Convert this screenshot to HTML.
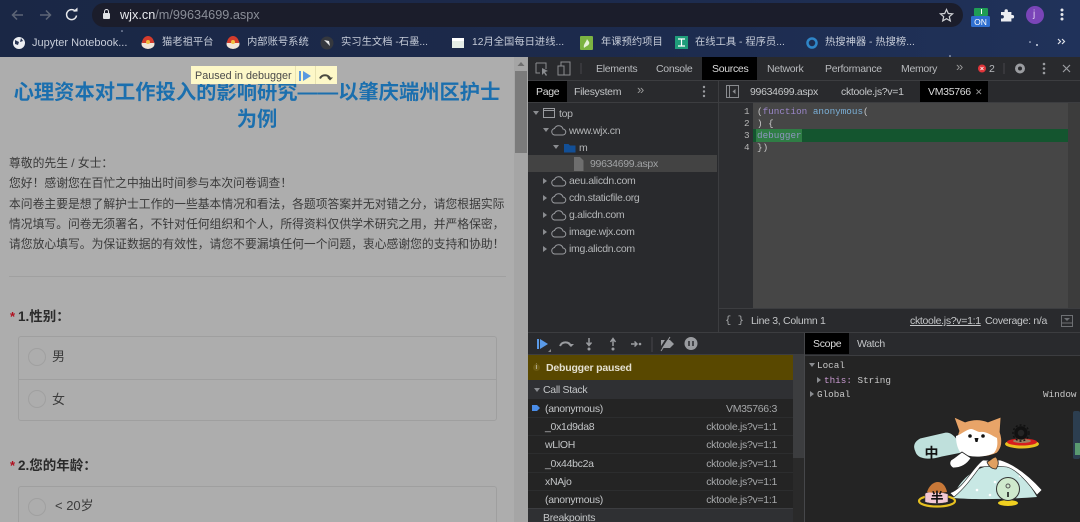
<!DOCTYPE html>
<html><head><meta charset="utf-8">
<style>
html,body{margin:0;padding:0;width:1080px;height:522px;overflow:hidden;background:#adadad}
body{position:relative;font-family:"Liberation Sans","Noto Sans CJK SC",sans-serif}
.a{position:absolute}
.t{position:absolute;white-space:nowrap;line-height:14px}
.bm{color:#c6ccd8;font-size:10.300px;top:36px}
.tab{color:#b8babd;font-size:10.500px;letter-spacing:-.3px;top:62px}
.sub{color:#c4c6c8;font-size:10.500px;letter-spacing:-.3px;top:85px}
.tree{color:#b4b6b8;font-size:10.500px;letter-spacing:-.3px}
.row{color:#c4c6c8;font-size:10.500px;letter-spacing:-.3px;left:545px}
.src{color:#a6a8aa;font-size:10.500px;letter-spacing:-.3px;right:303px}
.mono{font-family:"Liberation Mono",monospace;font-size:9.300px;color:#c8c8c8}
.cn{color:#3a3a3a;font-size:11.800px;left:9px;line-height:14px}
.line{position:absolute;background:#3c3d40}
.sep{position:absolute;background:#2c2d2e;left:528px;width:265px;height:1px}
svg{position:absolute;overflow:visible}
</style></head><body>

<!-- browser chrome -->
<div class="a" style="left:0;top:0;width:1080px;height:57px;background:linear-gradient(90deg,#1a2745,#1c2a4c 55%,#20325a)"></div>
<div class="a" style="left:92px;top:3px;width:871px;height:24px;border-radius:12px;background:#1b1d2b"></div>
<svg style="left:0;top:0" width="120" height="30" fill="none"><path d="M23 15h-10m4-4.500l-4.500 4.500 4.500 4.500" stroke="#5d6576" stroke-width="1.500"/><path d="M40 15h10m-4-4.500l4.500 4.500-4.500 4.500" stroke="#5d6576" stroke-width="1.500"/><path d="M75.500 11.500a5 5 0 1 0 1 4" stroke="#e6e8ec" stroke-width="1.500"/><path d="M73 11.500h4.500v-4z" fill="#e6e8ec"/><rect x="103" y="13" width="7" height="6" rx="1" fill="#e0e2e6"/><path d="M104.500 13v-1.500a2 2 0 0 1 4 0v1.500" stroke="#e0e2e6"/></svg>
<div class="t" style="left:120px;top:8px;font-size:12.700px;color:#e8eaee;line-height:14px">wjx.cn<span style="color:#8a8e98">/m/99634699.aspx</span></div>
<svg style="left:0;top:0" width="1080" height="57" fill="none">
<path d="M946.500 9.500l1.800 4 4.300.4-3.300 2.800 1 4.200-3.800-2.200-3.800 2.200 1-4.200-3.300-2.800 4.300-.4z" stroke="#d0d2d6" stroke-width="1.200"/>
<rect x="974" y="8" width="14" height="8" rx="1" fill="#1f9d55"/><rect x="981" y="9" width="1" height="5" fill="#fff"/><rect x="971" y="16" width="19" height="11" rx="1.500" fill="#2f6fd0"/>
<path d="M1001 12h3.500v-1a1.700 1.700 0 0 1 3.400 0v1h3.500v3h1a1.700 1.700 0 0 1 0 3.400h-1v3.100h-10.400v-3h1.200a1.700 1.700 0 0 0 0-3.400h-1.200z" fill="#eceef2"/>
<circle cx="1035" cy="15" r="9" fill="#7a45b8"/>
<circle cx="1062" cy="10" r="1.500" fill="#e6e8ec"/><circle cx="1062" cy="14.500" r="1.500" fill="#e6e8ec"/><circle cx="1062" cy="19" r="1.500" fill="#e6e8ec"/>
<circle cx="19" cy="43" r="6" fill="#eceef2"/><path d="M15 40l4 2-1 3-3-1zM21 38l2 3-3 1z" fill="#2a3654"/>
<ellipse cx="148" cy="44" rx="6.500" ry="5" fill="#f2e6d8"/><path d="M142 43c0-4 3-7 6-7s6 3 6 7z" fill="#d43c2c"/><circle cx="148" cy="42" r="2" fill="#f0c040"/>
<ellipse cx="233" cy="44" rx="6.500" ry="5" fill="#f2e6d8"/><path d="M227 43c0-4 3-7 6-7s6 3 6 7z" fill="#d43c2c"/><circle cx="233" cy="42" r="2" fill="#f0c040"/>
<circle cx="327" cy="43" r="6.500" fill="#35383e"/><path d="M324 40l5 1 1 5z" fill="#e8e8e8"/>
<rect x="452" y="38" width="12" height="10" fill="#e4ece6"/><rect x="452" y="38" width="12" height="3" fill="#fff"/>
<rect x="580" y="36" width="13" height="14" rx="1" fill="#7cb342"/><path d="M584 48c-1-4 2-5 3-9 1 2 3 3 2 5-1 2-3 2-5 4z" fill="#e6f2d8"/>
<rect x="675" y="36" width="13" height="13" fill="#1f9d7a"/><path d="M678 39h7M681.500 39v7M678 46h7" stroke="#fff" stroke-width="1.200"/>
<circle cx="812" cy="43" r="4.500" stroke="#2f86c8" stroke-width="2.500"/>
<path d="M1058 41l2.500 2.500-2.500 2.500M1062 41l2.500 2.500-2.500 2.500" stroke="#dfe2e8" stroke-width="1.200" transform="translate(0,-2)"/>
<circle cx="1030" cy="42" r=".8" fill="#cfd6e6"/><circle cx="1037" cy="45" r="1" fill="#cfd6e6"/><circle cx="950" cy="56" r=".8" fill="#cfd6e6"/><circle cx="122" cy="31" r=".8" fill="#aab4c8"/>
</svg>
<div class="t bm" style="left:32px;font-size:11px">Jupyter Notebook...</div>
<div class="t bm" style="left:162px">猫老祖平台</div>
<div class="t bm" style="left:247px">内部账号系统</div>
<div class="t bm" style="left:341px">实习生文档 -石墨...</div>
<div class="t bm" style="left:472px">12月全国每日进线...</div>
<div class="t bm" style="left:601px">年课预约项目</div>
<div class="t bm" style="left:695px">在线工具 - 程序员...</div>
<div class="t bm" style="left:825px">热搜神器 - 热搜榜...</div>
<div class="t" style="left:971px;top:17px;font-size:8.500px;color:#fff;line-height:10px;width:19px;text-align:center">ON</div>
<div class="t" style="left:1033px;top:8px;font-size:10px;color:#e0d0f0">j</div>

<!-- page -->
<div class="a" style="left:0;top:57px;width:514px;height:465px;background:#adadad"></div>
<div class="a" style="left:514px;top:57px;width:14px;height:465px;background:#a5a5a5"></div>
<div class="a" style="left:515px;top:71px;width:12px;height:82px;background:#7b7b7b"></div>
<svg style="left:514px;top:57px" width="14" height="14"><path d="M7 5l3.500 4h-7z" fill="#6e6e6e"/></svg>
<div class="t" style="left:0;width:514px;top:80px;text-align:center;font-size:20.300px;line-height:27px;font-weight:700;color:#1b6fae;white-space:normal;padding:0 8px;box-sizing:border-box">心理资本对工作投入的影响研究——以肇庆端州区护士为例</div>
<div class="t cn" style="top:156px">尊敬的先生 / 女士：</div>
<div class="t cn" style="top:176px">您好！感谢您在百忙之中抽出时间参与本次问卷调查！</div>
<div class="t cn" style="top:197px">本问卷主要是想了解护士工作的一些基本情况和看法，各题项答案并无对错之分，请您根据实际</div>
<div class="t cn" style="top:217px">情况填写。问卷无须署名，不针对任何组织和个人，所得资料仅供学术研究之用，并严格保密，</div>
<div class="t cn" style="top:237px">请您放心填写。为保证数据的有效性，请您不要漏填任何一个问题，衷心感谢您的支持和协助！</div>
<div class="a" style="left:9px;top:276px;width:497px;height:1px;background:#a0a0a0"></div>

<div class="t" style="left:10px;top:310px;font-size:13px;color:#b01020;font-weight:700">*</div>
<div class="t" style="left:18px;top:310px;font-size:13.500px;color:#2a2a2a;font-weight:700">1.性别：</div>
<div class="a" style="left:18px;top:336px;width:477px;height:83px;border:1px solid #9f9f9f;border-radius:3px"></div>
<div class="a" style="left:19px;top:379px;width:477px;height:1px;background:#9f9f9f"></div>
<div class="a" style="left:28px;top:348px;width:16px;height:16px;border:1px solid #a0a0a0;border-radius:50%"></div>
<div class="a" style="left:28px;top:390px;width:16px;height:16px;border:1px solid #a0a0a0;border-radius:50%"></div>
<div class="t" style="left:52px;top:350px;font-size:13px;color:#3c3c3c">男</div>
<div class="t" style="left:52px;top:393px;font-size:13px;color:#3c3c3c">女</div>
<div class="t" style="left:10px;top:459px;font-size:13px;color:#b01020;font-weight:700">*</div>
<div class="t" style="left:18px;top:459px;font-size:13.500px;color:#2a2a2a;font-weight:700">2.您的年龄：</div>
<div class="a" style="left:18px;top:486px;width:477px;height:50px;border:1px solid #9f9f9f;border-radius:3px"></div>
<div class="a" style="left:28px;top:498px;width:16px;height:16px;border:1px solid #a0a0a0;border-radius:50%"></div>
<div class="t" style="left:55px;top:499px;font-size:13px;color:#3c3c3c">&lt; 20岁</div>

<!-- paused banner -->
<div class="a" style="left:191px;top:66px;width:146px;height:18px;background:#fdf8c8"></div>
<div class="a" style="left:295px;top:66px;width:1px;height:18px;background:#e8e2b0"></div>
<div class="a" style="left:315px;top:66px;width:1px;height:18px;background:#e8e2b0"></div>
<div class="t" style="left:195px;top:69px;font-size:10.800px;color:#4a4a4a">Paused in debugger</div>
<svg style="left:0;top:0" width="340" height="90" fill="none"><path d="M299 71h2v10h-2z" fill="#5a9ae0"/><path d="M303 71l8 5-8 5z" fill="#5a9ae0"/><path d="M320 78.500a5.500 5.500 0 0 1 10 0" stroke="#4a4a40" stroke-width="2"/><path d="M327 77.500h6l-3 3z" fill="#4a4a40"/></svg>

<!-- devtools -->
<div class="a" style="left:528px;top:57px;width:552px;height:465px;background:#292a2d"></div>
<div class="line" style="left:528px;top:80px;width:552px;height:1px"></div>
<div class="a" style="left:702px;top:57px;width:55px;height:23px;background:#000"></div>
<svg style="left:528px;top:57px" width="80" height="23" fill="none"><path d="M8 6h10v6M8 6v10h4" stroke="#8a8c90"/><path d="M14 11l6 3-3 1 2 3-1 1-2-3-2 2z" fill="#8a8c90"/><rect x="30" y="9" width="6" height="9" stroke="#8a8c90"/><path d="M33 9V5h9v13h-6" stroke="#8a8c90"/><path d="M53 6v11" stroke="#46474a"/></svg>
<div class="t tab" style="left:596px">Elements</div>
<div class="t tab" style="left:656px">Console</div>
<div class="t tab" style="left:712px;color:#dcdcdc">Sources</div>
<div class="t tab" style="left:767px">Network</div>
<div class="t tab" style="left:825px">Performance</div>
<div class="t tab" style="left:901px">Memory</div>
<div class="t tab" style="left:956px;color:#999;font-size:13px;top:60px">»</div>
<svg style="left:960px;top:57px" width="120" height="23" fill="none"><circle cx="22" cy="11.500" r="4" fill="#e0353a"/><path d="M20.500 10l3 3m0-3l-3 3" stroke="#fff" stroke-width=".8"/><path d="M44 6v11" stroke="#46474a"/><circle cx="60" cy="11.500" r="3.500" stroke="#9a9ca0" stroke-width="3"/><circle cx="84" cy="7" r="1.300" fill="#9a9ca0"/><circle cx="84" cy="11.500" r="1.300" fill="#9a9ca0"/><circle cx="84" cy="16" r="1.300" fill="#9a9ca0"/><path d="M103 8l7 7m0-7l-7 7" stroke="#9a9ca0" stroke-width="1.200"/></svg>
<div class="t tab" style="left:989px">2</div>

<!-- left sources pane -->
<div class="a" style="left:528px;top:81px;width:39px;height:21px;background:#000"></div>
<div class="line" style="left:528px;top:102px;width:190px;height:1px"></div>
<div class="line" style="left:718px;top:81px;width:1px;height:252px"></div>
<div class="t sub" style="left:536px;color:#dcdcdc">Page</div>
<div class="t sub" style="left:574px">Filesystem</div>
<div class="t sub" style="left:637px;color:#999;font-size:13px;top:83px">»</div>
<svg style="left:698px;top:81px" width="12" height="22"><circle cx="6" cy="6" r="1.200" fill="#9a9ca0"/><circle cx="6" cy="10.500" r="1.200" fill="#9a9ca0"/><circle cx="6" cy="15" r="1.200" fill="#9a9ca0"/></svg>
<div class="a" style="left:528px;top:155px;width:189px;height:17px;background:#434343"></div>
<svg style="left:0;top:0" width="720" height="260" fill="none" stroke="#9a9ca0">
<path d="M533 111h6l-3 4z" fill="#8a8c90" stroke="none"/><rect x="543.500" y="108.500" width="11" height="9"/><path d="M544 110.500h10" />
<path d="M543 128h6l-3 4z" fill="#8a8c90" stroke="none"/>
<path id="c0" d="M554.500 135h8a3 3 0 0 0 .5-6 4.500 4.500 0 0 0-8.500-.5 3.300 3.300 0 0 0 0 6.500z"/>
<path d="M553 145h6l-3 4z" fill="#8a8c90" stroke="none"/><path d="M564 144h4.500l1.500 1.500h5.500v7H564z" fill="#124f96" stroke="none"/>
<path d="M574 157h6l3.500 3.500V171H574z" fill="#6e6e6e" stroke="none"/>
<path d="M543 178l4 3-4 3z" fill="#8a8c90" stroke="none"/><path d="M554.500 186h8a3 3 0 0 0 .5-6 4.500 4.500 0 0 0-8.500-.5 3.300 3.300 0 0 0 0 6.500z"/>
<path d="M543 195l4 3-4 3z" fill="#8a8c90" stroke="none"/><path d="M554.500 203h8a3 3 0 0 0 .5-6 4.500 4.500 0 0 0-8.500-.5 3.300 3.300 0 0 0 0 6.500z"/>
<path d="M543 212l4 3-4 3z" fill="#8a8c90" stroke="none"/><path d="M554.500 220h8a3 3 0 0 0 .5-6 4.500 4.500 0 0 0-8.500-.5 3.300 3.300 0 0 0 0 6.500z"/>
<path d="M543 229l4 3-4 3z" fill="#8a8c90" stroke="none"/><path d="M554.500 237h8a3 3 0 0 0 .5-6 4.500 4.500 0 0 0-8.500-.5 3.300 3.300 0 0 0 0 6.500z"/>
<path d="M543 246l4 3-4 3z" fill="#8a8c90" stroke="none"/><path d="M554.500 254h8a3 3 0 0 0 .5-6 4.500 4.500 0 0 0-8.500-.5 3.300 3.300 0 0 0 0 6.500z"/>
</svg>
<div class="t tree" style="left:559px;top:107px">top</div>
<div class="t tree" style="left:569px;top:124px">www.wjx.cn</div>
<div class="t tree" style="left:579px;top:141px">m</div>
<div class="t tree" style="left:590px;top:157px;color:#a0a2a4">99634699.aspx</div>
<div class="t tree" style="left:569px;top:174px">aeu.alicdn.com</div>
<div class="t tree" style="left:569px;top:191px">cdn.staticfile.org</div>
<div class="t tree" style="left:569px;top:208px">g.alicdn.com</div>
<div class="t tree" style="left:569px;top:225px">image.wjx.com</div>
<div class="t tree" style="left:569px;top:242px">img.alicdn.com</div>

<!-- editor -->
<div class="line" style="left:719px;top:102px;width:361px;height:1px"></div>
<svg style="left:726px;top:85px" width="16" height="14" fill="none" stroke="#8a8c90"><rect x=".5" y=".5" width="12" height="12"/><path d="M3.500 .5v12"/><path d="M9.500 4l-3 2.500 3 2.500z" fill="#8a8c90" stroke="none"/></svg>
<div class="a" style="left:920px;top:81px;width:68px;height:21px;background:#000"></div>
<div class="t sub" style="left:750px">99634699.aspx</div>
<div class="t sub" style="left:841px">cktoole.js?v=1</div>
<div class="t sub" style="left:928px;color:#dcdcdc">VM35766</div>
<div class="t sub" style="left:975px;color:#999;font-size:9px">✕</div>
<div class="a" style="left:719px;top:103px;width:34px;height:205px;background:#2d2e31"></div>
<div class="a" style="left:753px;top:103px;width:327px;height:205px;background:#464646"></div>
<div class="a" style="left:753px;top:129px;width:315px;height:13px;background:#14552f"></div>
<div class="a" style="left:756px;top:129px;width:46px;height:13px;background:#2f7d45"></div>
<div class="a" style="left:1068px;top:103px;width:12px;height:205px;background:#3c3c3c"></div>
<div class="t mono" style="left:744px;top:105px;color:#b8b8b8">1</div>
<div class="t mono" style="left:744px;top:117px;color:#b8b8b8">2</div>
<div class="t mono" style="left:744px;top:129px;color:#b8b8b8">3</div>
<div class="t mono" style="left:744px;top:141px;color:#b8b8b8">4</div>
<div class="t mono" style="left:757px;top:105px">(<span style="color:#9a86c8">function</span> <span style="color:#7bb0d8">anonymous</span>(</div>
<div class="t mono" style="left:757px;top:117px">) {</div>
<div class="t mono" style="left:757px;top:129px;color:#8f96c0">debugger</div>
<div class="t mono" style="left:757px;top:141px">})</div>

<!-- status bar -->
<div class="line" style="left:719px;top:308px;width:361px;height:1px"></div>
<div class="line" style="left:528px;top:332px;width:552px;height:1px"></div>
<div class="t sub" style="left:725px;top:314px;font-family:'Liberation Mono',monospace;color:#a8aaac;letter-spacing:0">{ }</div>
<div class="t sub" style="left:751px;top:314px">Line 3, Column 1</div>
<div class="t sub" style="left:910px;top:314px;text-decoration:underline">cktoole.js?v=1:1</div>
<div class="t sub" style="left:985px;top:314px">Coverage: n/a</div>
<svg style="left:1061px;top:315px" width="14" height="14" fill="none" stroke="#6e7074"><rect x=".5" y=".5" width="11" height="11"/><path d="M3 3h6l-3 3z" fill="#6e7074" stroke="none"/><path d="M.5 8h11"/></svg>

<!-- debugger left -->
<div class="a" style="left:528px;top:333px;width:276px;height:22px;background:#292a2d"></div>
<svg style="left:528px;top:333px" width="170" height="22" fill="none">
<path d="M9 6h2v10H9z" fill="#5a9ae8"/><path d="M12 6l8 5-8 5z" fill="#5a9ae8"/><path d="M20 19l3-3v3z" fill="#888"/>
<path d="M32 13a6 6 0 0 1 11 0" stroke="#9a9ca0" stroke-width="2"/><path d="M40 11h6l-3 3z" fill="#9a9ca0"/>
<path d="M61 5v7m-2.500-2.500L61 12.500l2.500-3" stroke="#9a9ca0" stroke-width="1.500"/><circle cx="61" cy="16" r="1.500" fill="#9a9ca0"/>
<path d="M85 13V6m-2.500 3L85 5.500 87.500 9" stroke="#9a9ca0" stroke-width="1.500"/><circle cx="85" cy="16" r="1.500" fill="#9a9ca0"/>
<path d="M103 11h6m-2.500-2.500L109 11l-2.500 2.500" stroke="#9a9ca0" stroke-width="1.500"/><circle cx="112" cy="11" r="1.300" fill="#9a9ca0"/>
<path d="M124 4v15" stroke="#46474a"/>
<path d="M133 7h9l4 4-4 4h-9z" fill="#9a9ca0"/><path d="M131 18l9-14" stroke="#292a2d" stroke-width="2"/><path d="M133 18l9-14" stroke="#9a9ca0"/>
<circle cx="163" cy="10.500" r="6.500" fill="#9a9ca0"/><path d="M161 8v5m4-5v5" stroke="#292a2d" stroke-width="1.500"/>
</svg>
<div class="line" style="left:528px;top:354px;width:276px;height:1px"></div>
<div class="a" style="left:528px;top:355px;width:265px;height:25px;background:#594800"></div>
<div class="a" style="left:533px;top:364px;width:7px;height:7px;border-radius:50%;background:#6c5a10"></div>
<div class="t" style="left:535.500px;top:361px;font-size:7px;color:#ddd">i</div>
<div class="t" style="left:546px;top:361px;font-size:10.500px;letter-spacing:-.2px;font-weight:700;color:#e4e0d0">Debugger paused</div>
<div class="a" style="left:528px;top:380px;width:265px;height:19px;background:#2f3033"></div>
<div class="a" style="left:528px;top:399px;width:265px;height:109px;background:#242424"></div>
<svg style="left:528px;top:380px" width="20" height="150"><path d="M6 8h6l-3 4z" fill="#8a8c90"/><path d="M6 135h6l-3 4z" fill="#8a8c90"/><path d="M4 25h5l3 3-3 3H4z" fill="#4a8de8"/></svg>
<div class="t row" style="left:543px;top:383px">Call Stack</div>
<div class="sep" style="top:417px"></div>
<div class="sep" style="top:435px"></div>
<div class="sep" style="top:453px"></div>
<div class="sep" style="top:472px"></div>
<div class="sep" style="top:490px"></div>
<div class="t row" style="top:402px">(anonymous)</div>
<div class="t row" style="top:420px">_0x1d9da8</div>
<div class="t row" style="top:438px">wLlOH</div>
<div class="t row" style="top:457px">_0x44bc2a</div>
<div class="t row" style="top:475px">xNAjo</div>
<div class="t row" style="top:493px">(anonymous)</div>
<div class="t src" style="top:402px">VM35766:3</div>
<div class="t src" style="top:420px">cktoole.js?v=1:1</div>
<div class="t src" style="top:438px">cktoole.js?v=1:1</div>
<div class="t src" style="top:457px">cktoole.js?v=1:1</div>
<div class="t src" style="top:475px">cktoole.js?v=1:1</div>
<div class="t src" style="top:493px">cktoole.js?v=1:1</div>
<div class="a" style="left:528px;top:508px;width:265px;height:14px;background:#2f3033"></div>
<div class="a" style="left:528px;top:508px;width:265px;height:1px;background:#3c3d40"></div>
<div class="t row" style="left:543px;top:511px">Breakpoints</div>
<div class="a" style="left:793px;top:355px;width:11px;height:167px;background:#2a2a2a"></div>
<div class="a" style="left:793px;top:355px;width:11px;height:103px;background:#3c3d3f"></div>
<div class="a" style="left:804px;top:333px;width:1px;height:189px;background:#46474a"></div>

<!-- scope -->
<div class="a" style="left:805px;top:333px;width:275px;height:189px;background:#242424"></div>
<div class="a" style="left:805px;top:333px;width:275px;height:22px;background:#292a2d"></div>
<div class="a" style="left:805px;top:333px;width:44px;height:21px;background:#000"></div>
<div class="line" style="left:805px;top:355px;width:275px;height:1px"></div>
<div class="t sub" style="left:813px;top:337px;color:#dcdcdc">Scope</div>
<div class="t sub" style="left:857px;top:337px">Watch</div>
<svg style="left:805px;top:356px" width="30" height="50"><path d="M4 7h6l-3 4z" fill="#8a8c90"/><path d="M12 21l4 3-4 3z" fill="#8a8c90"/><path d="M5 35l4 3-4 3z" fill="#8a8c90"/></svg>
<div class="t mono" style="left:817px;top:359px">Local</div>
<div class="t mono" style="left:824px;top:374px"><span style="color:#c89ad0">this:</span> String</div>
<div class="t mono" style="left:817px;top:388px">Global</div>
<div class="t mono" style="left:1043px;top:388px">Window</div>

<!-- sticker -->
<svg style="left:905px;top:410px" width="175" height="112">
<rect x="168" y="1" width="7" height="48" rx="2" fill="#2c3e50"/><rect x="170" y="33" width="5" height="12" fill="#5a9a70"/>
<path d="M10 42c-3-6-1-11 5-14l26-6c6 0 12 6 14 13l2 8-20 4c-10 3-24 4-27-5z" fill="#bfe0dc" stroke="#222" stroke-width="1"/>
<text x="19.500" y="48" font-size="14" font-family="'Noto Sans CJK SC',sans-serif" font-weight="700" fill="#111">中</text>
<path d="M48 88c6-18 20-30 40-33 22-2 36 18 44 32-25 2-60 3-84 1z" fill="#c8e8e4"/>
<circle cx="90" cy="72" r="1.300" fill="#fff"/><circle cx="72" cy="80" r="1.300" fill="#fff"/><circle cx="115" cy="66" r="1.300" fill="#fff"/><circle cx="85" cy="85" r="1.300" fill="#fff"/>
<path d="M45 83c14-5 22-25 33-33 6 1 12 0 17 0 17 5 31 18 42 30l-5 5c-10-14-20-25-30-28-8-1-18-1-27 0-6 8-14 20-26 30z" fill="#fff" stroke="#222" stroke-width=".6"/>
<path d="M49 7l11 5c8-3 16-3 23 0l13-5-1 15c3 9 2 16-3 21-10 5-28 5-36-1-4-6-5-14-2-21z" fill="#e8a468" stroke="#222" stroke-width=".8"/>
<path d="M51 26c6-2 11-7 15-7 3 0 6 3 9 3 6-1 11 3 17 6 1 7 0 11-3 15-10 5-26 5-34-1-3-5-4-10-4-16z" fill="#fff"/>
<circle cx="65" cy="26" r="1.800" fill="#111"/><circle cx="78" cy="26" r="1.800" fill="#111"/><path d="M69.500 28h4l-1 4h-2z" fill="#111"/>
<path d="M46 50c4-2 8-6 11-8l9 6c-3 5-8 10-18 10-3-2-4-5-2-8z" fill="#fff" stroke="#222" stroke-width=".8"/>
<path d="M82 52c4-2 6-5 9-5 3 4 3 8 0 12-4 0-7-2-9-7z" fill="#e0a060" stroke="#222" stroke-width=".8"/>
<ellipse cx="32" cy="91" rx="18" ry="5.500" fill="none" stroke="#e6c020" stroke-width="2.200"/>
<path d="M20 84c0-2 10-4 23 0v8c-6 2-18 2-23 0z" fill="#f2c8d4" stroke="#333" stroke-width=".5"/><path d="M22 82c2-6 6-10 11-10 5 0 8 5 9 10-7 1-14 1-20 0z" fill="#c87838"/>
<text x="25.500" y="92" font-size="13" font-family="'Noto Sans CJK SC',sans-serif" font-weight="700" fill="#111">半</text>
<ellipse cx="103" cy="93" rx="10" ry="3" fill="#f0d020"/><circle cx="103" cy="79" r="11.500" fill="#cfeacd" stroke="#333" stroke-width="1"/><circle cx="103" cy="76" r="2" fill="none" stroke="#555"/><path d="M103 82v5" stroke="#111" stroke-width="1.500"/>
<ellipse cx="117" cy="34" rx="17" ry="4.500" fill="#e8c020"/><ellipse cx="117" cy="32" rx="15" ry="3.500" fill="#d61e1e"/><ellipse cx="117" cy="31" rx="9" ry="2" fill="#a08060"/>
<circle cx="116" cy="23" r="5" fill="none" stroke="#111" stroke-width="3.500"/><circle cx="116" cy="23" r="8" fill="none" stroke="#111" stroke-width="1.500" stroke-dasharray="2 2"/>
</svg>
</body></html>
